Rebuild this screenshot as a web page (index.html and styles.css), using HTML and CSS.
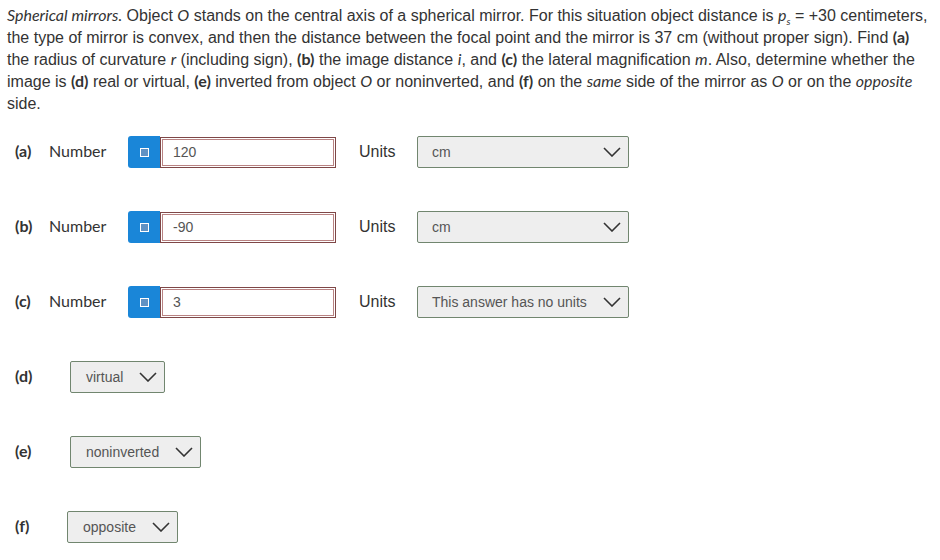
FILE: index.html
```html
<!DOCTYPE html>
<html>
<head>
<meta charset="utf-8">
<link rel="stylesheet" href="styles.css">
</head>
<body>
<p class="question"><em>Spherical mirrors.</em> Object <em>O</em> stands on the central axis of a spherical mirror. For this situation object distance is <em>p<sub>s</sub></em> = +30 centimeters, the type of mirror is convex, and then the distance between the focal point and the mirror is 37 cm (without proper sign). Find <b>(a)</b> the radius of curvature <em>r</em> (including sign), <b>(b)</b> the image distance <em>i</em>, and <b>(c)</b> the lateral magnification <em>m</em>. Also, determine whether the image is <b>(d)</b> real or virtual, <b>(e)</b> inverted from object <em>O</em> or noninverted, and <b>(f)</b> on the <em>same</em> side of the mirror as <em>O</em> or on the <em>opposite</em> side.</p>

<div class="answers">
  <div class="row">
    <span class="part">(a)</span>
    <span class="kind">Number</span>
    <span class="btn"><span class="sq"></span></span>
    <span class="input">120</span>
    <span class="units">Units</span>
    <span class="select wide"><span>cm</span><svg class="chev" width="18" height="10" viewBox="0 0 18 10"><polyline points="1,1 9,9 17,1" fill="none" stroke="#333" stroke-width="1.6"/></svg></span>
  </div>
  <div class="row">
    <span class="part">(b)</span>
    <span class="kind">Number</span>
    <span class="btn"><span class="sq"></span></span>
    <span class="input">-90</span>
    <span class="units">Units</span>
    <span class="select wide"><span>cm</span><svg class="chev" width="18" height="10" viewBox="0 0 18 10"><polyline points="1,1 9,9 17,1" fill="none" stroke="#333" stroke-width="1.6"/></svg></span>
  </div>
  <div class="row">
    <span class="part">(c)</span>
    <span class="kind">Number</span>
    <span class="btn"><span class="sq"></span></span>
    <span class="input">3</span>
    <span class="units">Units</span>
    <span class="select wide"><span>This answer has no units</span><svg class="chev" width="18" height="10" viewBox="0 0 18 10"><polyline points="1,1 9,9 17,1" fill="none" stroke="#333" stroke-width="1.6"/></svg></span>
  </div>
  <div class="row">
    <span class="part long">(d)</span>
    <span class="select"><span>virtual</span><svg class="chev" width="18" height="10" viewBox="0 0 18 10"><polyline points="1,1 9,9 17,1" fill="none" stroke="#333" stroke-width="1.6"/></svg></span>
  </div>
  <div class="row">
    <span class="part long">(e)</span>
    <span class="select"><span>noninverted</span><svg class="chev" width="18" height="10" viewBox="0 0 18 10"><polyline points="1,1 9,9 17,1" fill="none" stroke="#333" stroke-width="1.6"/></svg></span>
  </div>
  <div class="row">
    <span class="part long f">(f)</span>
    <span class="select"><span>opposite</span><svg class="chev" width="18" height="10" viewBox="0 0 18 10"><polyline points="1,1 9,9 17,1" fill="none" stroke="#333" stroke-width="1.6"/></svg></span>
  </div>
</div>
</body>
</html>
```

FILE: styles.css
```css
body {
  margin: 0;
  padding: 5px 7px 0 7px;
  background: #fff;
  color: #333;
}
.question {
  margin: 0;
  font-family: "Liberation Sans", Arial, sans-serif;
  font-size: 16px;
  line-height: 22px;
  color: #333;
}
.question em {
  font-family: Lato, sans-serif;
  font-style: italic;
  line-height: 0;
}
.question b {
  font-family: Lato, sans-serif;
  font-weight: 700;
  line-height: 0;
}
.question sub {
  font-size: 10px;
  line-height: 0;
}
.answers {
  margin-top: 21px;
  padding-left: 8px;
  display: flex;
  flex-direction: column;
  gap: 43px;
}
.row {
  display: flex;
  align-items: center;
  height: 32px;
}
.part {
  width: 34px;
  font-family: Lato, sans-serif;
  font-weight: 700;
  font-size: 16px;
  line-height: 20px;
  margin-top: -3px;
  color: #333;
}
.part.long {
  width: 55px;
}
.part.f {
  width: 52px;
}
.kind {
  width: 79px;
  font-family: Lato, sans-serif;
  font-size: 16px;
  line-height: 20px;
  margin-top: -3px;
  color: #333;
}
.btn {
  width: 32px;
  height: 32px;
  background: #1a86d8;
  border-radius: 3px 0 0 3px;
  display: flex;
  align-items: center;
  justify-content: center;
}
.sq {
  width: 7px;
  height: 7px;
  border: 1.5px solid #fff;
  background: #5f92c4;
}
.input {
  box-sizing: border-box;
  width: 176px;
  height: 31px;
  border: 1px solid #7f4747;
  box-shadow: inset 0 0 0 1px #fff, inset 0 0 0 2px #b98383;
  display: flex;
  align-items: center;
  padding-left: 12px;
  font-family: "Liberation Sans", Arial, sans-serif;
  font-size: 14px;
  color: #555;
}
.units {
  margin-left: 23px;
  width: 58px;
  font-family: "Liberation Sans", Arial, sans-serif;
  font-size: 16px;
  color: #333;
}
.select {
  box-sizing: border-box;
  height: 32px;
  background: #eee;
  border: 1px solid #71866f;
  border-radius: 2px;
  display: flex;
  align-items: center;
  padding: 0 7px 0 15px;
  gap: 16px;
  font-family: "Liberation Sans", Arial, sans-serif;
  font-size: 14px;
  color: #555;
}
.select.wide {
  width: 212px;
  padding-left: 14px;
}
.select.wide .chev {
  margin-left: auto;
}
.chev {
  display: block;
}
```
